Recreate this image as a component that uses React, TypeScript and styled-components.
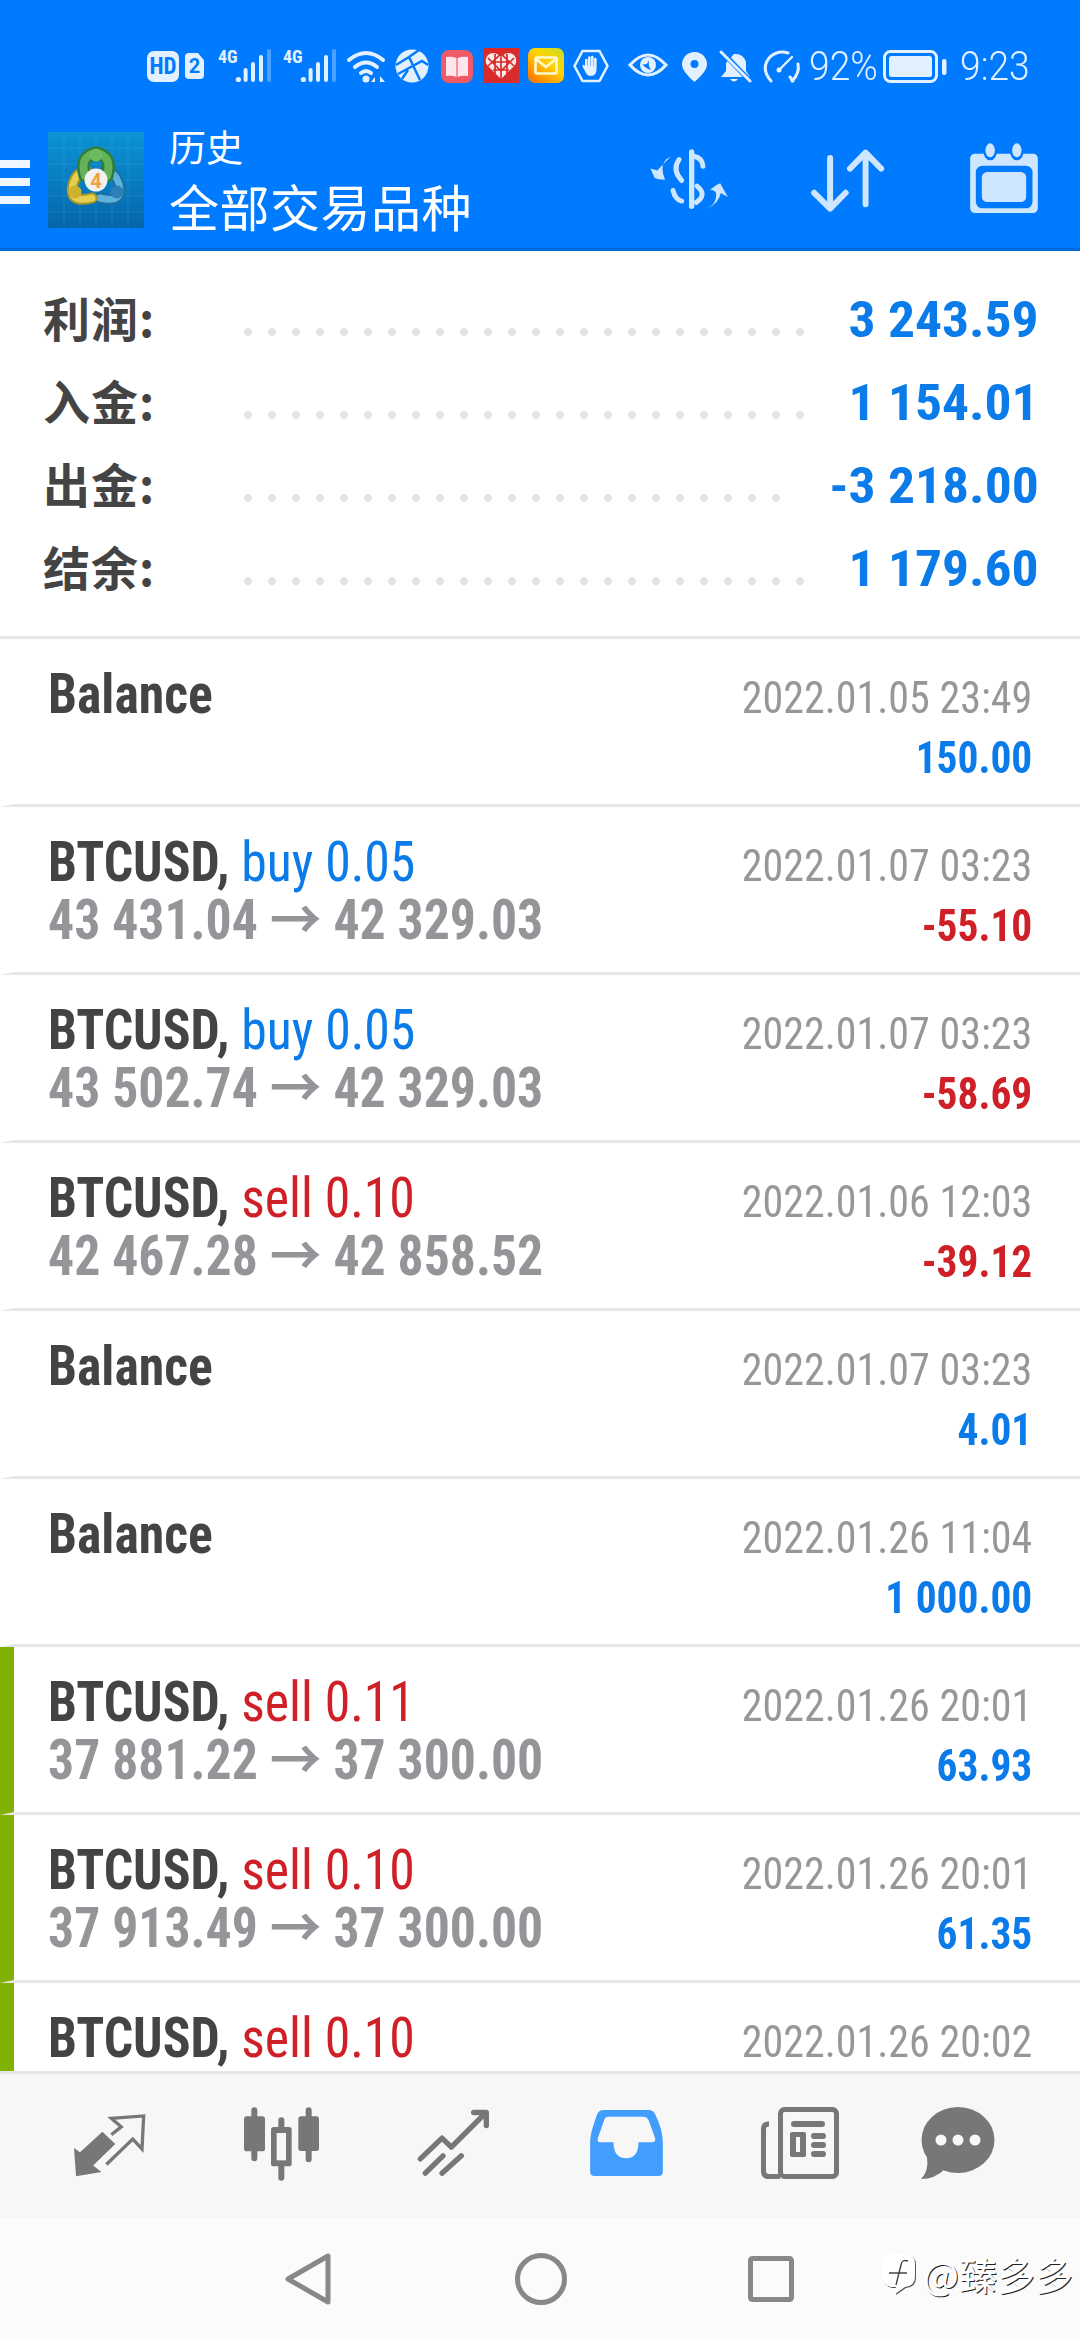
import React from "react";
import styled, { createGlobalStyle } from "styled-components";

const BLUE = "#0a7be8";
const RED = "#cf2027";
const ICON = "#e3f0ff";
const TOOL = "#cfe6ff";
const GREY = "#777777";
const NAVBG = "#f7f7f7";

const GlobalStyle = createGlobalStyle`
  html, body { margin: 0; padding: 0; background: #fff; }
  body {
    width: 1080px;
    height: 2340px;
    overflow: hidden;
    font-family: Roboto, "Noto Sans CJK SC", sans-serif;
  }
`;

const Page = styled.div`
  width: 1080px;
  height: 2340px;
  display: flex;
  flex-direction: column;
  overflow: hidden;
`;

const TopArea = styled.header`
  height: 248px;
  background: #007bff;
  border-bottom: 3px solid #0069dc;
  display: flex;
  flex-direction: column;
`;

const StatusBar = styled.div`
  height: 132px;
  padding: 49px 0 0 147px;
  box-sizing: border-box;
  display: flex;
  align-items: flex-start;
  color: ${ICON};
`;

const Glyph = styled.svg<{ $ml?: number; $mt?: number }>`
  display: block;
  flex: none;
  overflow: visible;
  margin-left: ${(p) => p.$ml ?? 0}px;
  margin-top: ${(p) => p.$mt ?? 0}px;
`;

const HdBadge = styled.div`
  width: 32px;
  height: 31px;
  margin-top: 2px;
  border-radius: 7px;
  background: ${ICON};
  color: #007bff;
  font-size: 23px;
  font-weight: 700;
  font-stretch: 75%;
  line-height: 31px;
  text-align: center;
`;

const SimBadge = styled.div`
  width: 19px;
  height: 26px;
  margin: 4px 0 0 6px;
  border-radius: 4px;
  background: ${ICON};
  clip-path: polygon(0 0, 68% 0, 100% 28%, 100% 100%, 0 100%);
  color: #007bff;
  font-size: 20px;
  font-weight: 700;
  line-height: 27px;
  text-align: center;
`;

const StatusText = styled.div<{ $ml: number; $w: number }>`
  width: ${(p) => p.$w}px;
  margin-left: ${(p) => p.$ml}px;
  font-size: 40px;
  font-weight: 300;
  line-height: 36px;
  height: 36px;
  white-space: nowrap;
  transform: scaleX(0.93);
  transform-origin: left center;
`;

const ToolBar = styled.div`
  flex: 1;
  display: flex;
  align-items: flex-start;
`;

const Burger = styled.div`
  width: 30px;
  margin-top: 28px;
  display: flex;
  flex-direction: column;
  gap: 10px;
`;

const BurgerLine = styled.div`
  height: 8px;
  background: #eef7ff;
`;

const Titles = styled.div`
  margin-left: 25px;
  width: 470px;
  color: #fff;
  font-family: "Noto Sans CJK SC", sans-serif;
`;

const SubTitle = styled.div`
  font-size: 37px;
  line-height: 37px;
  margin-top: -4px;
`;

const MainTitle = styled.div`
  font-size: 50px;
  line-height: 56px;
  margin-top: 12px;
  letter-spacing: 0.5px;
`;

const Summary = styled.section`
  height: 388px;
  padding: 27px 0 0 43px;
  box-sizing: border-box;
  border-bottom: 3px solid #e6e6e6;
  display: flex;
  flex-direction: column;
`;

const SummaryRow = styled.div`
  height: 83px;
  display: flex;
  align-items: center;
  padding-right: 44px;
`;

const SummaryLabel = styled.div`
  width: 201px;
  margin-top: -6px;
  font-family: "Noto Sans CJK SC", sans-serif;
  font-size: 47px;
  font-weight: 700;
  color: #444;
  letter-spacing: 1px;
  white-space: nowrap;
`;

const Dots = styled.div<{ $count: number }>`
  width: ${(p) => p.$count * 24}px;
  height: 8px;
  margin-top: 24px;
  background: radial-gradient(ellipse 4px 4px at 4px 4px, #e4e4e4 95%, transparent 100%) left / 24px 8px repeat-x;
`;

const SummaryValue = styled.div`
  margin-left: auto;
  margin-right: -3px;
  font-size: 50px;
  font-weight: 700;
  font-stretch: 75%;
  color: ${BLUE};
  white-space: nowrap;
  transform: scaleX(1.07);
  transform-origin: right center;
`;

const List = styled.main`
  flex: 1;
  min-height: 0;
  overflow: hidden;
`;

const Row = styled.div<{ $profit?: boolean }>`
  height: 165px;
  border-bottom: 3px solid #e6e6e6;
  display: flex;
  box-sizing: content-box;
  border-left: 14px solid ${(p) => (p.$profit ? "#80b000" : "transparent")};
  padding-right: 48px;
  justify-content: space-between;
`;

const RowLeft = styled.div`
  padding: 26px 0 0 34px;
`;

const RowRight = styled.div`
  padding-top: 29px;
  text-align: right;
`;

const Line = styled.div`
  font-size: 55px;
  line-height: 58px;
  height: 58px;
  font-stretch: 75%;
  white-space: nowrap;
  transform: scaleX(0.94);
  transform-origin: left center;
`;

const Symbol = styled.span`
  font-weight: 700;
  color: #444;
`;

const Side = styled.span<{ $dir: "buy" | "sell" }>`
  color: ${(p) => (p.$dir === "buy" ? BLUE : RED)};
  font-weight: 400;
`;

const Prices = styled.span`
  font-weight: 700;
  color: #939598;
`;

const DateText = styled.div`
  font-size: 44px;
  line-height: 60px;
  font-stretch: 75%;
  color: #979797;
  white-space: nowrap;
  transform: scaleX(0.955);
  transform-origin: right center;
`;

const Profit = styled.div<{ $neg?: boolean }>`
  font-size: 44px;
  line-height: 60px;
  font-weight: 700;
  font-stretch: 75%;
  color: ${(p) => (p.$neg ? RED : BLUE)};
  transform: scaleX(0.94);
  transform-origin: right center;
`;

const BottomTabs = styled.nav`
  height: 144px;
  background: ${NAVBG};
  border-top: 3px solid #e6e6e6;
  display: flex;
  align-items: flex-start;
`;

const SystemNav = styled.div`
  position: relative;
  height: 122px;
  background: #fbfbfb;
  display: flex;
  align-items: flex-start;
`;

const Watermark = styled.div`
  position: absolute;
  left: 881px;
  top: 28px;
  width: 195px;
  display: flex;
  align-items: center;
  gap: 7px;
  color: #fff;
  font-size: 38px;
  font-family: "Noto Sans CJK SC", sans-serif;
  text-shadow: 1px 1px 0 #222;
  white-space: nowrap;
`;

const SignalIcon = ({ ml }: { ml: number }) => (
  <Glyph $ml={ml} width="53" height="34" viewBox="218 49 53 34">
    <text x="218" y="63" fontSize="18" fontWeight="700" fill={ICON} fontFamily="Roboto" style={{ fontStretch: "75%" }}>4G</text>
    <circle cx="238.4" cy="79.5" r="2.6" fill={ICON} />
    <rect x="243.6" y="68" width="4" height="14" rx="2" fill={ICON} />
    <rect x="251" y="62" width="4" height="20" rx="2" fill={ICON} />
    <rect x="259" y="55" width="4" height="27" rx="2" fill={ICON} />
    <rect x="267" y="49" width="4" height="33" rx="2" fill="#4da0ff" />
  </Glyph>
);

const Logo = () => (
  <Glyph $ml={18} width="96" height="96" viewBox="0 0 96 96">
    <defs>
      <linearGradient id="lg" x1="0" y1="0" x2="0" y2="1">
        <stop offset="0" stopColor="#0b95d5" />
        <stop offset="1" stopColor="#0565ab" />
      </linearGradient>
    </defs>
    <rect width="96" height="96" fill="url(#lg)" />
    <path d="M0 16H96M0 32H96M0 48H96M0 64H96M0 80H96M16 0V96M32 0V96M48 0V96M64 0V96M80 0V96" stroke="#4db4e6" strokeOpacity=".22" strokeWidth="1" />
    <g fill="none" strokeLinecap="round">
      <path d="M52 66Q76 72 71 52Q68 41 58 38" stroke="#1f6c9f" strokeWidth="11" />
      <path d="M52 66Q76 72 71 52Q68 41 58 38" stroke="#5cb2dc" strokeWidth="7" />
      <path d="M44 66Q20 72 25 52Q28 41 38 38" stroke="#a8962a" strokeWidth="11" />
      <path d="M44 66Q20 72 25 52Q28 41 38 38" stroke="#e3d04e" strokeWidth="7" />
      <path d="M37 44Q31 24 48 21Q65 24 59 44" stroke="#2f7d3c" strokeWidth="13" />
      <path d="M37 44Q31 24 48 21Q65 24 59 44" stroke="#63b257" strokeWidth="8" />
    </g>
    <circle cx="48" cy="23" r="6.500" fill="#6cbb5e" />
    <circle cx="27" cy="60" r="6.500" fill="#cdb22f" />
    <circle cx="69" cy="60" r="6.500" fill="#2d7fb8" />
    <circle cx="48" cy="48" r="11.500" fill="#f1f1f1" />
    <text x="48" y="55.500" textAnchor="middle" fontSize="20" fontWeight="700" fill="#f0a040" fontFamily="Roboto">4</text>
  </Glyph>
);

const Summaries = [
  { label: "利润:", dots: 24, value: "3 243.59" },
  { label: "入金:", dots: 24, value: "1 154.01" },
  { label: "出金:", dots: 23, value: "-3 218.00" },
  { label: "结余:", dots: 24, value: "1 179.60" },
];

type Deal = {
  symbol: string;
  dir?: "buy" | "sell";
  volume?: string;
  open?: string;
  close?: string;
  date: string;
  profit?: string;
  marked?: boolean;
};

const deals: Deal[] = [
  { symbol: "Balance", date: "2022.01.05 23:49", profit: "150.00" },
  { symbol: "BTCUSD", dir: "buy", volume: "0.05", open: "43 431.04", close: "42 329.03", date: "2022.01.07 03:23", profit: "-55.10" },
  { symbol: "BTCUSD", dir: "buy", volume: "0.05", open: "43 502.74", close: "42 329.03", date: "2022.01.07 03:23", profit: "-58.69" },
  { symbol: "BTCUSD", dir: "sell", volume: "0.10", open: "42 467.28", close: "42 858.52", date: "2022.01.06 12:03", profit: "-39.12" },
  { symbol: "Balance", date: "2022.01.07 03:23", profit: "4.01" },
  { symbol: "Balance", date: "2022.01.26 11:04", profit: "1 000.00" },
  { symbol: "BTCUSD", dir: "sell", volume: "0.11", open: "37 881.22", close: "37 300.00", date: "2022.01.26 20:01", profit: "63.93", marked: true },
  { symbol: "BTCUSD", dir: "sell", volume: "0.10", open: "37 913.49", close: "37 300.00", date: "2022.01.26 20:01", profit: "61.35", marked: true },
  // last row is cut by the tab bar, only its first line shows
  { symbol: "BTCUSD", dir: "sell", volume: "0.10", date: "2022.01.26 20:02", marked: true },
];

export default function App() {
  return (
    <Page>
      <GlobalStyle />
      <TopArea>
        <StatusBar>
          <HdBadge>HD</HdBadge>
          <SimBadge>2</SimBadge>
          <SignalIcon ml={14} />
          <SignalIcon ml={12} />
          {/* wifi */}
          <Glyph $ml={11} width="42" height="34" viewBox="0 0 42 34" fill="none" stroke={ICON} strokeWidth="4" strokeLinecap="round">
            <path d="M2 11Q19-3 36 11M8 18Q19 9 30 18M14 24Q19 20 24 24" />
            <circle cx="19" cy="30" r="3.5" fill={ICON} stroke="none" />
            <path d="M28 28l-4 5h4zM33 33v-6l5 6z" fill={ICON} stroke="none" />
          </Glyph>
          {/* globe */}
          <Glyph $ml={6} width="34" height="34" viewBox="0 0 34 34">
            <circle cx="17" cy="17" r="16.5" fill={ICON} />
            <path d="M1 16L14 8L24 1M14 8L25 31M3 25L27 12L33 16M7 30L13 21" fill="none" stroke="#007bff" strokeWidth="2.4" />
          </Glyph>
          {/* book */}
          <Glyph $ml={12} $mt={1} width="32" height="33" viewBox="0 0 32 33">
            <rect width="32" height="33" rx="8" fill="#ee5a67" />
            <path d="M5 7Q11 6 15.4 8V27Q11 25 5 26ZM27 7Q21 6 16.6 8V27Q21 25 27 26Z" fill="#ffe6ec" />
          </Glyph>
          {/* heart */}
          <Glyph $ml={10} $mt={-1} width="36" height="35" viewBox="0 0 36 35">
            <rect width="36" height="35" fill="#d82b2b" />
            <path d="M18 31L4 17Q1 12 5 7Q11 2 18 9Q25 2 31 7Q35 12 32 17Z" fill="#fbe9e9" />
            <path d="M5 10L18 23L31 10M5 18L18 6L31 18M12 6V27M18 9V31M24 6V27M8 14H28M10 22H26" stroke="#d82b2b" strokeWidth="1.7" fill="none" />
          </Glyph>
          {/* mail */}
          <Glyph $ml={9} $mt={-1} width="36" height="35" viewBox="0 0 36 35">
            <defs>
              <linearGradient id="mailbg" x1="1" y1="0" x2="0.2" y2="1">
                <stop offset="0" stopColor="#c6dc2c" />
                <stop offset="0.45" stopColor="#ffd400" />
                <stop offset="1" stopColor="#ff7a00" />
              </linearGradient>
            </defs>
            <rect width="36" height="35" rx="7" fill="url(#mailbg)" />
            <rect x="7.5" y="9.5" width="21" height="16" rx="1.5" fill="none" stroke="#fff8d0" strokeWidth="2.6" />
            <path d="M8 11L18 19L28 11" fill="none" stroke="#fff8d0" strokeWidth="2.6" />
          </Glyph>
          {/* hand */}
          <Glyph $ml={9} width="36" height="34" viewBox="0 0 36 34">
            <path d="M9.5 2H26.5L34.5 17L26.5 32H9.5L1.5 17Z" fill="none" stroke={ICON} strokeWidth="2.6" strokeLinejoin="round" />
            <path d="M12 11a1.3 1.3 0 012.6 0V17H15V8.5a1.3 1.3 0 012.6 0V17H18V8a1.3 1.3 0 012.6 0V17H21V10a1.3 1.3 0 012.6 0V20Q23.600 27 18 27Q13.500 27 12 22L9.500 17.500Q9 15.500 11 15.700L12 17Z" fill={ICON} />
          </Glyph>
          {/* eye */}
          <Glyph $ml={19} $mt={4} width="40" height="24" viewBox="0 0 40 24">
            <path d="M2 12Q20-8 38 12Q20 32 2 12Z" fill="none" stroke={ICON} strokeWidth="3.2" />
            <circle cx="20" cy="12" r="8" fill={ICON} />
            <path d="M14 11Q19 13 21 7Q20 13 23 17Q17 15 14 11Z" fill="#007bff" />
          </Glyph>
          {/* pin */}
          <Glyph $ml={14} $mt={3} width="25" height="30" viewBox="0 0 25 30">
            <path d="M12.500 0C5.500 0 0 5.500 0 12.300C0 19 8 26 12.500 30C17 26 25 19 25 12.300C25 5.500 19.500 0 12.500 0Z" fill={ICON} />
            <circle cx="12.500" cy="12" r="4" fill="#007bff" />
          </Glyph>
          {/* muted bell */}
          <Glyph $ml={13} $mt={2} width="32" height="32" viewBox="0 0 32 32">
            <path d="M14 3Q23 2 26 11L26 20L30 26H1L6 20L6 12Z" fill={ICON} />
            <path d="M10 28H18Q14 33 10 28Z" fill={ICON} />
            <path d="M2 1L31 31" stroke="#007bff" strokeWidth="5" />
            <path d="M1 1L30 30" stroke={ICON} strokeWidth="3" strokeLinecap="round" />
          </Glyph>
          {/* gauge */}
          <Glyph $ml={11} $mt={1} width="36" height="33" viewBox="0 0 36 33" fill="none" stroke={ICON} strokeWidth="3" strokeLinecap="round">
            <path d="M8 31Q-3 18 7 7Q15 0 25 3" />
            <path d="M35 14Q37 23 29 31" />
            <path d="M17 19L29 7" strokeWidth="2.400" />
            <circle cx="16" cy="20" r="2.500" fill={ICON} stroke="none" />
            <path d="M27 27L30 31" />
          </Glyph>
          <StatusText $ml={10} $w={66}>92%</StatusText>
          {/* battery */}
          <Glyph $ml={8} $mt={1} width="64" height="33" viewBox="0 0 64 33">
            <rect x="1.500" y="1.500" width="52" height="30" rx="6" fill="none" stroke={ICON} strokeWidth="3" />
            <rect x="6" y="6" width="43" height="21" rx="2.500" fill={ICON} />
            <rect x="59" y="9" width="4.500" height="16" rx="2" fill={ICON} />
          </Glyph>
          <StatusText $ml={13} $w={67}>9:23</StatusText>
        </StatusBar>
        <ToolBar>
          <Burger>
            <BurgerLine />
            <BurgerLine />
            <BurgerLine />
          </Burger>
          <Logo />
          <Titles>
            <SubTitle>历史</SubTitle>
            <MainTitle>全部交易品种</MainTitle>
          </Titles>
          {/* balance filter */}
          <Glyph $ml={10} $mt={16} width="80" height="63" viewBox="60 50 240 190" fill="none" stroke={TOOL} strokeWidth="16" strokeLinecap="round">
            <path d="M188 62V226" />
            <path d="M222 105Q220 80 195 75M150 85Q128 115 158 148M204 165Q236 190 202 214M132 178Q138 205 158 210" strokeWidth="15" />
            <path d="M125 76Q100 88 100 112Q100 130 108 146Q85 146 76 140L64 112L84 118Z" fill={TOOL} stroke="none" />
            <path d="M235 232Q262 220 262 190Q262 178 244 176Q262 160 274 156L297 198L276 186Q268 220 235 232Z" fill={TOOL} stroke="none" />
          </Glyph>
          {/* sort */}
          <Glyph $ml={81} $mt={16} width="74" height="64" viewBox="535 50 222 193" fill="none" stroke={TOOL} strokeWidth="18" strokeLinecap="round" strokeLinejoin="round">
            <path d="M595 80V232M547 185L595 233L642 185" />
            <path d="M702 220V64M655 112L702 64L749 112" />
          </Glyph>
          {/* calendar */}
          <Glyph $ml={86} $mt={11} width="68" height="70" viewBox="1015 40 203 210">
            <rect x="1015" y="72" width="203" height="178" rx="14" fill={TOOL} />
            <rect x="1032" y="108" width="170" height="128" rx="20" fill="#007bff" />
            <rect x="1050" y="127" width="133" height="90" rx="16" fill={TOOL} />
            <ellipse cx="1075" cy="62" rx="21" ry="30" fill="#007bff" />
            <ellipse cx="1155" cy="62" rx="21" ry="30" fill="#007bff" />
            <ellipse cx="1075" cy="62" rx="14" ry="21" fill={TOOL} />
            <ellipse cx="1155" cy="62" rx="14" ry="21" fill={TOOL} />
          </Glyph>
        </ToolBar>
      </TopArea>

      <Summary>
        {Summaries.map((s) => (
          <SummaryRow key={s.label}>
            <SummaryLabel>{s.label}</SummaryLabel>
            <Dots $count={s.dots} />
            <SummaryValue>{s.value}</SummaryValue>
          </SummaryRow>
        ))}
      </Summary>

      <List>
        {deals.map((d, i) => (
          <Row key={i} $profit={d.marked}>
            <RowLeft>
              <Line>
                <Symbol>{d.symbol}{d.dir ? ", " : ""}</Symbol>
                {d.dir && <Side $dir={d.dir}>{d.dir} {d.volume}</Side>}
              </Line>
              {d.open && <Line><Prices>{d.open} → {d.close}</Prices></Line>}
            </RowLeft>
            <RowRight>
              <DateText>{d.date}</DateText>
              {d.profit && <Profit $neg={d.profit.startsWith("-")}>{d.profit}</Profit>}
            </RowRight>
          </Row>
        ))}
      </List>

      <BottomTabs>
        {/* trade */}
        <Glyph $ml={73} $mt={39} width="74" height="64" viewBox="70 66 222 194">
          <path d="M72 172L90 185L158 123L197 160L130 225L155 245L78 258Z" fill={GREY} />
          <path d="M170 222L250 145L278 175L283 75L185 82L215 108L185 132" fill="none" stroke={GREY} strokeWidth="10" />
        </Glyph>
        {/* quotes */}
        <Glyph $ml={97} $mt={33} width="75" height="74" viewBox="582 50 225 222">
          <path d="M613 60V204M694 90V262M776 60V207" stroke={GREY} strokeWidth="18" strokeLinecap="round" />
          <rect x="582" y="78" width="63" height="105" rx="8" fill={GREY} />
          <rect x="663" y="110" width="62" height="118" rx="8" fill={GREY} />
          <rect x="680" y="128" width="28" height="82" fill={NAVBG} />
          <rect x="745" y="78" width="62" height="104" rx="8" fill={GREY} />
        </Glyph>
        {/* trading */}
        <Glyph $ml={99} $mt={35} width="71" height="67" viewBox="115 58 213 200" fill="none" stroke={GREY} strokeWidth="16" strokeLinecap="round" strokeLinejoin="round">
          <path d="M122 207L187 145L215 172L315 72" />
          <path d="M282 68H320V107" />
          <path d="M137 250L190 198M187 250L245 198" />
        </Glyph>
        {/* history, active */}
        <Glyph $ml={101} $mt={36} width="73" height="66" viewBox="630 60 218 198">
          <path d="M665 60H805Q820 60 826 75C840 105 848 130 848 160V245Q848 258 835 258H643Q630 258 630 245V160C630 130 640 105 650 75Q655 60 670 60Z" fill="#429efe" />
          <path d="M685 80H790Q800 80 805 90L825 145Q827 157 815 157H775Q775 205 738 205Q700 205 700 157H660Q650 157 653 145L672 90Q675 80 685 80Z" fill={NAVBG} />
        </Glyph>
        {/* news */}
        <Glyph $ml={98} $mt={33} width="78" height="72" viewBox="0 0 78 72">
          <rect x="19.500" y="2.500" width="56" height="67" rx="4" fill="none" stroke={GREY} strokeWidth="5" />
          <path d="M19 69.500H8Q2.500 69.500 2.500 64V22Q2.500 17 8 17" fill="none" stroke={GREY} strokeWidth="5" />
          <rect x="30" y="14" width="34" height="6" rx="3" fill={GREY} />
          <rect x="29" y="25" width="16" height="25" rx="2" fill={GREY} />
          <rect x="35" y="30" width="4" height="15" fill={NAVBG} />
          <rect x="50" y="26" width="15" height="6" rx="3" fill={GREY} />
          <rect x="50" y="35" width="15" height="6" rx="3" fill={GREY} />
          <rect x="50" y="44" width="15" height="6" rx="3" fill={GREY} />
        </Glyph>
        {/* chat */}
        <Glyph $ml={82} $mt={33} width="74" height="72" viewBox="0 0 74 72">
          <ellipse cx="37" cy="33" rx="36.500" ry="33" fill={GREY} />
          <path d="M6 50Q8 64 0 72Q14 72 24 62Z" fill={GREY} />
          <circle cx="20" cy="33" r="5.500" fill={NAVBG} />
          <circle cx="37" cy="33" r="5.500" fill={NAVBG} />
          <circle cx="54" cy="33" r="5.500" fill={NAVBG} />
        </Glyph>
      </BottomTabs>

      <SystemNav>
        <Glyph $ml={285} $mt={35} width="47" height="52" viewBox="0 0 47 52" fill="none" stroke="#888" strokeWidth="5" strokeLinejoin="round">
          <path d="M43 3V49L3 26Z" />
        </Glyph>
        <Glyph $ml={183} $mt={35} width="52" height="52" viewBox="0 0 52 52">
          <circle cx="26" cy="26" r="23.500" fill="none" stroke="#888" strokeWidth="5" />
        </Glyph>
        <Glyph $ml={181} $mt={38} width="46" height="46" viewBox="0 0 46 46">
          <rect x="2.500" y="2.500" width="41" height="41" rx="2" fill="none" stroke="#888" strokeWidth="5" />
        </Glyph>
        <Watermark>
          <Glyph width="35" height="42" viewBox="0 0 35 42" style={{ filter: "drop-shadow(1px 1px 0 #555)" }}>
            <path d="M12 1H24Q34 1 34 11V24Q34 33 24 34L14 41L15 34H10Q1 32 1 22V12Q1 2 12 1Z" fill="#fff" />
            <path d="M27 8Q21 6 20 12L15 32M8 20H26" fill="none" stroke="#444" strokeWidth="1.400" />
          </Glyph>
          <span>@臻多多</span>
        </Watermark>
      </SystemNav>
    </Page>
  );
}
